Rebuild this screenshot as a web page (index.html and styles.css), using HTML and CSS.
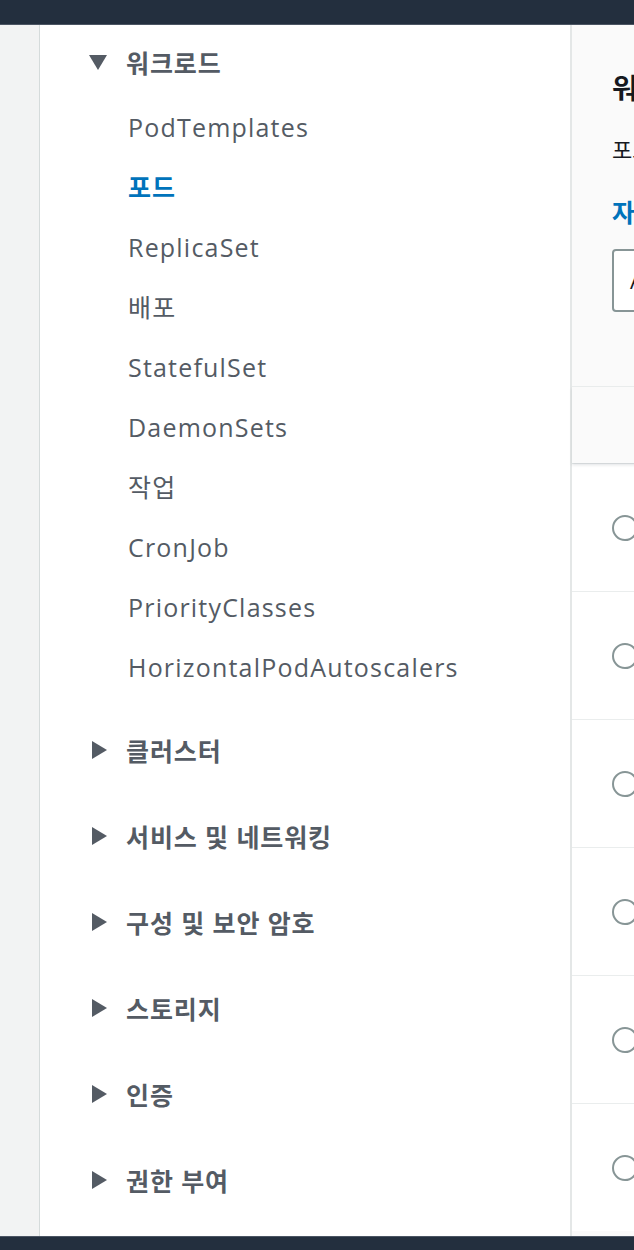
FILE: index.html
```html
<!DOCTYPE html>
<html lang="ko">
<head>
<meta charset="utf-8">
<link rel="stylesheet" href="styles.css">
</head>
<body>
<div class="topbar"></div>
<div class="main">
  <div class="gutter"></div>
  <nav class="sidebar">
    <div class="section open">
      <div class="sec-head"><span class="tri-down"></span><span>워크로드</span></div>
      <ul class="items">
        <li>PodTemplates</li>
        <li class="active">포드</li>
        <li>ReplicaSet</li>
        <li>배포</li>
        <li>StatefulSet</li>
        <li>DaemonSets</li>
        <li>작업</li>
        <li>CronJob</li>
        <li>PriorityClasses</li>
        <li>HorizontalPodAutoscalers</li>
      </ul>
    </div>
    <div class="section"><div class="sec-head"><span class="tri-right"></span><span>클러스터</span></div></div>
    <div class="section"><div class="sec-head"><span class="tri-right"></span><span>서비스 및 네트워킹</span></div></div>
    <div class="section"><div class="sec-head"><span class="tri-right"></span><span>구성 및 보안 암호</span></div></div>
    <div class="section"><div class="sec-head"><span class="tri-right"></span><span>스토리지</span></div></div>
    <div class="section"><div class="sec-head"><span class="tri-right"></span><span>인증</span></div></div>
    <div class="section"><div class="sec-head"><span class="tri-right"></span><span>권한 부여</span></div></div>
  </nav>
  <section class="content">
    <div class="content-head">
      <h2 class="title">워크로드: 포드</h2>
      <p class="desc">포드는 Kubernetes에서 생성하고 관리할 수 있는 가장 작은 배포 단위입니다.</p>
      <a class="learn">자세히 알아보기</a>
      <div class="select">All namespaces</div>
    </div>
    <div class="table">
      <div class="thead"></div>
      <div class="row"><span class="radio"></span></div>
      <div class="row"><span class="radio"></span></div>
      <div class="row"><span class="radio"></span></div>
      <div class="row"><span class="radio"></span></div>
      <div class="row"><span class="radio"></span></div>
      <div class="row"><span class="radio"></span></div>
    </div>
  </section>
</div>
<div class="footer"></div>
</body>
</html>
```
FILE: styles.css
```css
html, body {
  margin: 0;
  padding: 0;
}
body {
  width: 634px;
  height: 1250px;
  overflow: hidden;
  font-family: "Open Sans", "Noto Sans CJK KR", sans-serif;
  color: #545b64;
  background: #f2f3f3;
}
.topbar {
  height: 24px;
  background: #232f3e;
  border-bottom: 1px solid #4b5563;
}
.main {
  display: flex;
  height: 1211px;
  overflow: hidden;
}
.gutter {
  flex: 0 0 39px;
  background: #f2f3f3;
  border-right: 1px solid #d5dbdb;
}
.sidebar {
  flex: 0 0 532px;
  background: #ffffff;
  border-right: 2px solid #e4e7e7;
  padding-top: 7px;
  box-sizing: border-box;
}
.section {
  margin-bottom: 26px;
}
.section.open {
  margin-bottom: 23px;
}
.sec-head {
  display: flex;
  align-items: center;
  height: 60px;
  padding-left: 48px;
  font-size: 25px;
  letter-spacing: 0.9px;
  font-weight: 700;
  color: #545b64;
}
.tri-down {
  width: 0;
  height: 0;
  border-left: 9px solid transparent;
  border-right: 9px solid transparent;
  border-top: 15px solid #545b64;
  margin-left: 1px;
  margin-right: 19px;
}
.tri-right {
  width: 0;
  height: 0;
  border-top: 9px solid transparent;
  border-bottom: 9px solid transparent;
  border-left: 15px solid #545b64;
  margin-left: 4px;
  margin-right: 19px;
}
.items {
  list-style: none;
  margin: 5px 0 0;
  padding: 0 0 0 88px;
}
.items li {
  height: 60px;
  line-height: 60px;
  font-size: 25px;
  letter-spacing: 1.2px;
  color: #545b64;
}
.items li.active {
  color: #0073bb;
  font-weight: 700;
  letter-spacing: 0.9px;
}
.content {
  flex: 1 0 auto;
  width: 600px;
  background: #fafafa;
}
.content-head {
  padding: 0 0 0 40px;
  height: 362px;
  box-sizing: border-box;
  border-bottom: 1px solid #eaeded;
  white-space: nowrap;
}
.title {
  margin: 0;
  padding-top: 45px;
  font-size: 28px;
  line-height: 36px;
  font-weight: 700;
  color: #16191f;
}
.desc {
  margin: 28px 0 0;
  font-size: 22px;
  line-height: 30px;
  color: #16191f;
}
.learn {
  display: block;
  margin-top: 33px;
  font-size: 25px;
  line-height: 30px;
  font-weight: 700;
  color: #0073bb;
}
.select {
  margin-top: 22px;
  width: 400px;
  height: 63px;
  box-sizing: border-box;
  border: 2px solid #879596;
  border-radius: 4px;
  background: #ffffff;
  padding-left: 16px;
  line-height: 59px;
  font-size: 22px;
  color: #16191f;
}
.thead {
  height: 76px;
  background: #fafafa;
  box-shadow: 0 2px 3px rgba(0, 22, 43, 0.12);
  position: relative;
}
.row {
  height: 128px;
  background: #ffffff;
  border-top: 1px solid #eaeded;
  box-sizing: border-box;
  display: flex;
  align-items: center;
  padding-left: 40px;
}
.row:first-of-type {
  border-top: none;
}
.radio {
  width: 22px;
  height: 22px;
  border: 2px solid #879596;
  border-radius: 50%;
  background: #fff;
  flex: 0 0 auto;
}
.footer {
  height: 13px;
  background: #232f3e;
  border-top: 1px solid #4b5563;
}
```
